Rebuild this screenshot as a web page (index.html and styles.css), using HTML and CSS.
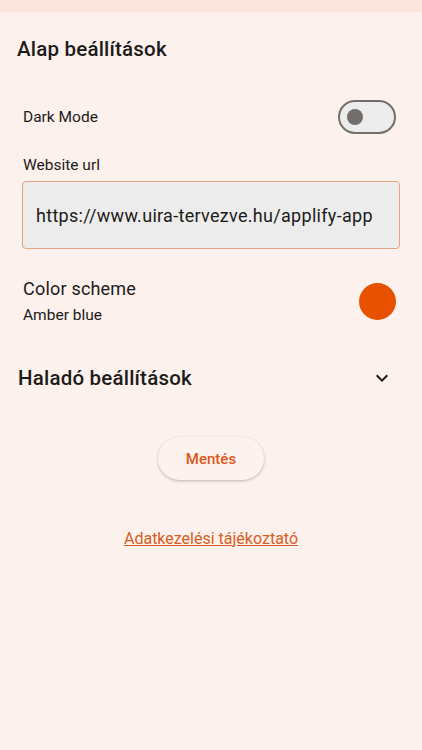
FILE: index.html
```html
<!DOCTYPE html>
<html lang="hu">
<head>
    <meta charset="UTF-8">
    <meta name="viewport" content="width=device-width, initial-scale=1.0">
    <title>Beállítások</title>
    <link rel="stylesheet" href="styles.css">
</head>
<body>
    <div class="topbar"></div>

    <div class="page">
        <h2 class="section-title">Alap beállítások</h2>

        <div class="row dark-row">
            <span class="label">Dark Mode</span>
            <div class="switch"><div class="thumb"></div></div>
        </div>

        <div class="field">
            <div class="label">Website url</div>
            <div class="input">https://www.uira-tervezve.hu/applify-app</div>
        </div>

        <div class="row scheme-row">
            <div>
                <div class="scheme-title">Color scheme</div>
                <div class="scheme-sub">Amber blue</div>
            </div>
            <div class="swatch"></div>
        </div>

        <div class="row advanced-row">
            <h2 class="section-title">Haladó beállítások</h2>
            <svg class="chevron" width="24" height="24" viewBox="0 0 24 24">
                <path d="M7.41 8.59 12 13.17l4.59-4.58L18 10l-6 6-6-6z" fill="#1c1b1f"/>
            </svg>
        </div>

        <div class="actions">
            <button class="save">Mentés</button>
            <a class="privacy" href="#">Adatkezelési tájékoztató</a>
        </div>
    </div>
</body>
</html>
```

FILE: styles.css
```css
body {
    margin: 0;
    background-color: #fcf1ec;
    font-family: Roboto, "Noto Sans", sans-serif;
    color: #1d1b1a;
}
.topbar {
    height: 12px;
    background-color: #fbe5dc;
}
.page {
    padding: 0 22px 0 17px;
}
.section-title {
    margin: 0;
    font-size: 20.5px;
    font-weight: 500;
    letter-spacing: 0.2px;
}
.page > .section-title {
    padding-top: 25px;
    line-height: 24px;
}
.row {
    display: flex;
    align-items: center;
    justify-content: space-between;
}
.label {
    font-size: 15.5px;
    line-height: 20px;
}
.dark-row {
    margin-top: 39px;
    padding-left: 6px;
    height: 34px;
}
.switch {
    width: 47px;
    height: 30px;
    border: 2px solid #716e6c;
    border-radius: 17px;
    background-color: #ececec;
    display: flex;
    align-items: center;
    padding-left: 7px;
    margin-right: 4px;
}
.thumb {
    width: 16px;
    height: 16px;
    border-radius: 50%;
    background-color: #716e6c;
}
.field {
    margin-top: 21px;
    padding-left: 5px;
}
.field .label {
    padding-left: 1px;
}
.input {
    margin-top: 6px;
    height: 66px;
    border: 1.5px solid #e8a384;
    border-radius: 4px;
    background-color: #ececec;
    font-size: 18px;
    display: flex;
    align-items: center;
    padding-left: 13px;
    letter-spacing: 0.3px;
}
.scheme-row {
    margin-top: 29px;
    padding-left: 6px;
}
.scheme-title {
    font-size: 18px;
    line-height: 22px;
    letter-spacing: 0.2px;
}
.scheme-sub {
    font-size: 15.5px;
    line-height: 20px;
    margin-top: 5px;
}
.swatch {
    width: 37px;
    height: 37px;
    border-radius: 50%;
    background-color: #e65100;
    margin-right: 4px;
}
.advanced-row {
    margin-top: 41px;
    padding-left: 1px;
}
.chevron {
    margin-right: 6px;
}
.actions {
    display: flex;
    flex-direction: column;
    align-items: center;
    padding-left: 5px;
}
.save {
    margin-top: 47px;
    width: 106px;
    height: 43px;
    border: none;
    border-radius: 22px;
    background-color: #fcf2ee;
    box-shadow: 0 1px 3px rgba(0, 0, 0, 0.25);
    color: #dc571a;
    font-family: Roboto, sans-serif;
    font-size: 15px;
    font-weight: 500;
}
.privacy {
    margin-top: 49px;
    color: #d65e24;
    font-size: 16px;
    text-decoration: underline;
}
```
